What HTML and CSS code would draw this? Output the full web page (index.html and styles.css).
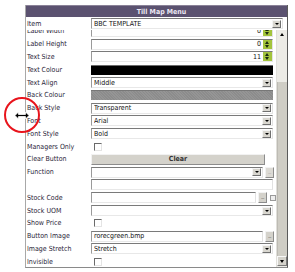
FILE: index.html
```html
<!DOCTYPE html>
<html>
<head>
<meta charset="utf-8">
<link rel="stylesheet" href="styles.css">
</head>
<body>
<div class="panel">
  <div class="header">Till Map Menu</div>
  <div class="row item-row">
    <div class="label">Item</div>
    <div class="val"><div class="sel wide"><span>BBC TEMPLATE</span><i class="dd"></i></div></div>
  </div>
  <div class="body">
    <div class="scroll">
      <div class="inner">
        <div class="row"><div class="label">Label Width</div><div class="val"><div class="num"><span>0</span><i class="spin"></i></div></div></div>
        <div class="row"><div class="label">Label Height</div><div class="val"><div class="num"><span>0</span><i class="spin"></i></div></div></div>
        <div class="row"><div class="label">Text Size</div><div class="val"><div class="num"><span>11</span><i class="spin"></i></div></div></div>
        <div class="row"><div class="label">Text Colour</div><div class="val"><div class="swatch black"></div></div></div>
        <div class="row"><div class="label">Text Align</div><div class="val"><div class="sel"><span>Middle</span><i class="dd"></i></div></div></div>
        <div class="row"><div class="label">Back Colour</div><div class="val"><div class="swatch grey"></div></div></div>
        <div class="row"><div class="label">Back Style</div><div class="val"><div class="sel"><span>Transparent</span><i class="dd"></i></div></div></div>
        <div class="row"><div class="label">Font</div><div class="val"><div class="sel"><span>Arial</span><i class="dd"></i></div></div></div>
        <div class="row"><div class="label">Font Style</div><div class="val"><div class="sel"><span>Bold</span><i class="dd"></i></div></div></div>
        <div class="row"><div class="label">Managers Only</div><div class="val"><i class="chk"></i></div></div>
        <div class="row"><div class="label">Clear Button</div><div class="val"><div class="btn">Clear</div></div></div>
        <div class="row"><div class="label">Function</div><div class="val"><div class="sel short"><span></span><i class="dd"></i></div><i class="dots dis">...</i></div></div>
        <div class="row"><div class="label"></div><div class="val"><div class="txt"></div></div></div>
        <div class="row"><div class="label">Stock Code</div><div class="val"><div class="txt shorter"></div><i class="dots">...</i><i class="sq"></i></div></div>
        <div class="row"><div class="label">Stock UOM</div><div class="val"><div class="sel"><span></span><i class="dd"></i></div></div></div>
        <div class="row"><div class="label">Show Price</div><div class="val"><i class="chk"></i></div></div>
        <div class="row"><div class="label">Button Image</div><div class="val"><div class="txt short"><span>rorecgreen.bmp</span></div><i class="dots">...</i></div></div>
        <div class="row"><div class="label">Image Stretch</div><div class="val"><div class="sel"><span>Stretch</span><i class="dd"></i></div></div></div>
        <div class="row"><div class="label">Invisible</div><div class="val"><i class="chk"></i></div></div>
      </div>
    </div>
    <div class="sbar">
      <div class="sbtn up"></div>
      <div class="strack"></div>
      <div class="sthumb"></div>
      <div class="sbtn down"></div>
    </div>
  </div>
</div>
<div class="marker">
  <svg width="16" height="9" viewBox="0 0 16 9"><path d="M1 4.5 L4.5 1 L4.5 3.5 L11.5 3.5 L11.5 1 L15 4.5 L11.5 8 L11.5 5.5 L4.5 5.5 L4.5 8 Z" fill="#000" stroke="#fff" stroke-width="0.8"/></svg>
</div>
</body>
</html>
```
FILE: styles.css
```css
html, body { margin: 0; padding: 0; background: #fff; }
body { font-family: "DejaVu Sans Condensed", "DejaVu Sans", Verdana, sans-serif; font-stretch: condensed; font-size: 7px; color: #2a2438; position: relative; width: 295px; height: 272px; overflow: hidden; }
.panel { margin: 5px 0 0 25px; width: 263px; height: 263px; border-left: 1px solid #a8a8a8; border-right: 1px solid #5a5a5a; border-bottom: 1px solid #8a8a8a; box-sizing: border-box; display: flex; flex-direction: column; }
.header { height: 12px; line-height: 12px; background: #5b5270; border-top: 1px solid #8a8298; color: #ece8f4; font-weight: bold; text-align: center; font-size: 7px; flex: none; box-sizing: border-box; padding-left: 10px; }
.row { display: flex; align-items: center; height: 12.8px; flex: none; }
.label { width: 65px; padding-left: 1px; box-sizing: border-box; white-space: nowrap; flex: none; }
.val { flex: 1; display: flex; align-items: center; gap: 2px; }
.item-row { height: 13px; }
.body { flex: 1; display: flex; min-height: 0; }
.scroll { flex: 1; overflow: hidden; }
.inner { margin-top: -5px; }
.sel, .txt, .num { height: 11px; box-sizing: border-box; border-top: 1px solid #7a7a7a; border-left: 1px solid #9a9a9a; border-right: 1px solid #e2e2e2; border-bottom: 1px solid #e8e8e8; background: #fff; display: flex; align-items: center; color: #111; width: 182px; padding-left: 2px; }
.sel span, .txt span { flex: 1; overflow: hidden; white-space: nowrap; }
.sel.wide { width: 192px; }
.sel.short { width: 172px; }
.txt.short { width: 172px; }
.txt.shorter { width: 165px; }
.dd { width: 9px; height: 8px; box-sizing: border-box; background: #d8d6cf; border: 1px solid; border-color: #f4f4f4 #707070 #707070 #f4f4f4; position: relative; margin-right: 1px; flex: none; }
.dd::after { content: ""; position: absolute; left: 2px; top: 2px; border-left: 2px solid transparent; border-right: 2px solid transparent; border-top: 2px solid #000; }
.num { justify-content: flex-end; padding-right: 0; }
.num span { margin-right: 2px; }
.spin { width: 9px; height: 9px; background: #a3c43c; position: relative; flex: none; }
.spin::before { content: ""; position: absolute; left: 2px; top: 1px; border-left: 2.5px solid transparent; border-right: 2.5px solid transparent; border-bottom: 3px solid #1a2a10; }
.spin::after { content: ""; position: absolute; left: 2px; top: 5px; border-left: 2.5px solid transparent; border-right: 2.5px solid transparent; border-top: 3px solid #1a2a10; }
.swatch { width: 182px; height: 10px; box-sizing: border-box; border-top: 1px solid #6a6a6a; }
.swatch.black { background: #000; }
.swatch.grey { background: repeating-linear-gradient(45deg, #8c8c8c 0 1px, #959595 1px 2px); border-top-color: #777; }
.chk { width: 8px; height: 8px; box-sizing: border-box; border: 1px solid; border-color: #6a6a6a #e4e4e4 #e4e4e4 #6a6a6a; background: #fff; margin-left: 3px; }
.btn { width: 174px; height: 11px; box-sizing: border-box; background: #d4d2cb; border: 1px solid; border-color: #f2f2f2 #8c8c8c #8c8c8c #f2f2f2; text-align: center; line-height: 9px; color: #333; font-weight: bold; }
.dots { width: 9px; height: 11px; box-sizing: border-box; background: #d4d2cb; border: 1px solid; border-color: #f2f2f2 #8c8c8c #8c8c8c #f2f2f2; font-style: normal; font-size: 5px; line-height: 9px; text-align: center; color: #333; letter-spacing: -0.5px; flex: none; }
.dots.dis { color: #999; background: #dcdad4; }
.sq { width: 6px; height: 6px; box-sizing: border-box; border: 1px solid #9a9a9a; background: #eee; margin-left: 1px; }
.sbar { width: 11px; flex: none; display: flex; flex-direction: column; background: #ecebe6; border-left: 1px solid #e0dfda; box-sizing: border-box; }
.sbtn { height: 10px; flex: none; background: #ecebe6; position: relative; }
.sbtn.up::after { content: ""; position: absolute; left: 3px; top: 3px; border-left: 2.5px solid transparent; border-right: 2.5px solid transparent; border-bottom: 3px solid #000; }
.sbtn.down { border: 1px solid; border-color: #f8f8f8 #7a7a7a #7a7a7a #f8f8f8; background: #d4d2cb; box-sizing: border-box; margin-bottom: 1px; }
.sbtn.down::after { content: ""; position: absolute; left: 2px; top: 3px; border-left: 2.5px solid transparent; border-right: 2.5px solid transparent; border-top: 3px solid #000; }
.strack { height: 42px; flex: none; }
.sthumb { flex: 1; background: #cfcdc5; border-left: 1px solid #bdbbb4; }
.marker { position: absolute; left: 4px; top: 97px; width: 36px; height: 36px; box-sizing: border-box; border: 2.5px solid #e8141c; border-radius: 50%; display: flex; align-items: center; justify-content: center; }
.marker svg { display: block; }
```
